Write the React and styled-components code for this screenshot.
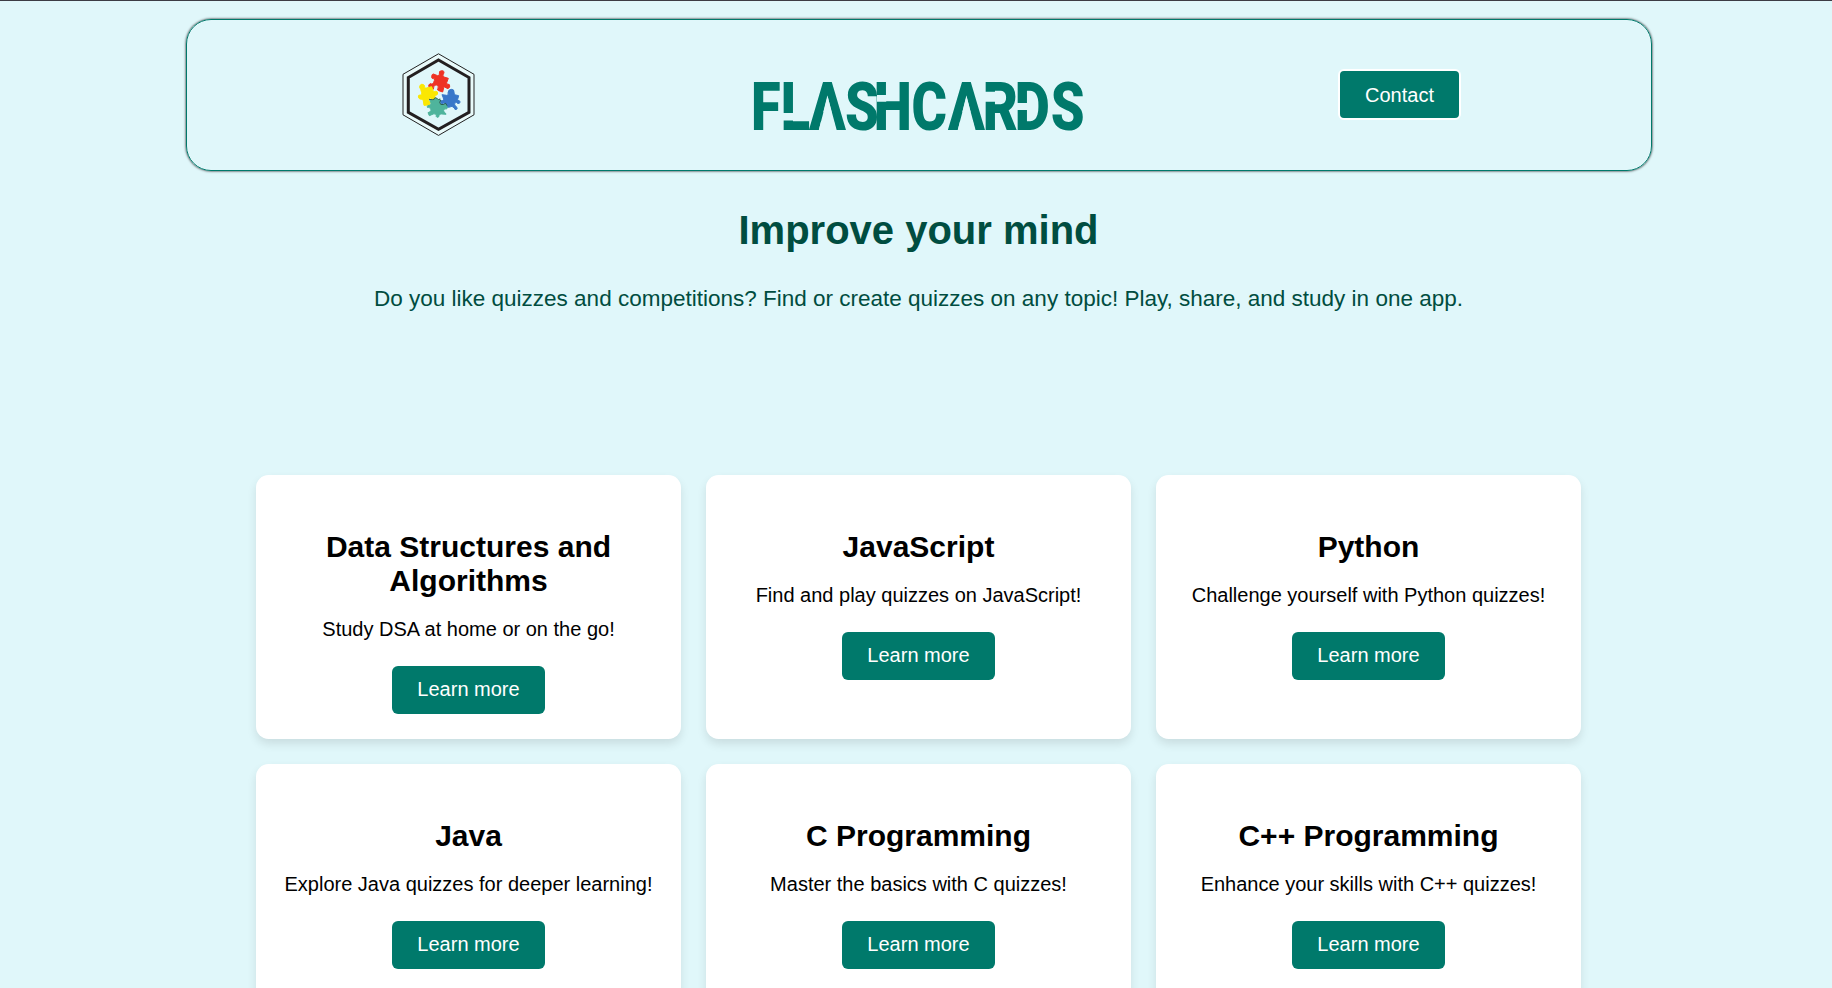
import React from "react";
import styled, { createGlobalStyle } from "styled-components";

const GlobalStyle = createGlobalStyle`
  * { box-sizing: border-box; }
  html, body { margin: 0; padding: 0; background: #e0f7fa; }
  body { height: 988px; overflow: hidden; font-family: "Liberation Sans", Arial, sans-serif; }
  h1, h2, p { margin: 0; }
`;

const Page = styled.div`
  display: flex;
  flex-direction: column;
  align-items: center;
  height: 988px;
  overflow: hidden;
  padding: 18px 0 0 5px;
  border-top: 1px solid #3c3c44;
  text-align: center;
`;

const Header = styled.header`
  display: grid;
  grid-template-columns: 502px 460px 501px;
  justify-items: center;
  flex: none;
  width: 1466px;
  height: 152px;
  margin-left: 1px;
  border: 1px solid #00796b;
  border-radius: 25px;
  box-shadow: 0 0 2.5px #000;
`;

const LogoSlot = styled.div`
  padding-top: 32px;
  height: 120px;
`;

const BrandSlot = styled.div`
  padding-top: 53px;
`;

const ContactSlot = styled.div`
  padding-top: 49px;
`;

const Art = styled.svg`
  display: block;
  overflow: visible;
`;

const Wordmark = styled.text`
  font-family: Roboto, sans-serif;
  font-weight: 900;
  font-size: 66px;
  fill: #00796b;
`;

const Button = styled.button`
  display: block;
  margin: 0 auto;
  border: 0;
  border-radius: 6px;
  width: 153px;
  height: 48px;
  padding: 0 0 1px;
  background: #00796b;
  color: #fff;
  font: 20px/23px "Liberation Sans", Arial, sans-serif;
`;

const ContactButton = styled(Button)`
  width: 123px;
  height: 51px;
  padding: 1px 0 0;
  border: 2px solid #fff;
`;

const Hero = styled.section`
  flex: none;
  padding-top: 36px;
  height: 304px;
  color: #004d40;
`;

const Headline = styled.h1`
  font-size: 40px;
  line-height: 46px;
`;

const Lead = styled.p`
  margin-top: 32px;
  font-size: 22.5px;
  line-height: 27px;
`;

const Grid = styled.main`
  display: grid;
  grid-template-columns: repeat(3, 425px);
  grid-auto-rows: 264px;
  gap: 25px;
  flex: none;
`;

const Card = styled.article`
  padding: 55px 25px 25px;
  border-radius: 12.5px;
  background: #fff;
  color: #000;
  box-shadow: 0 5px 10px rgba(0, 0, 0, 0.1);
`;

const CardTitle = styled.h2`
  font-size: 30px;
  line-height: 34px;
`;

const CardText = styled.p`
  margin: 20px 0 25px;
  font-size: 20px;
  line-height: 23px;
  white-space: nowrap;
`;

const topics = [
  ["Data Structures and Algorithms", "Study DSA at home or on the go!"],
  ["JavaScript", "Find and play quizzes on JavaScript!"],
  ["Python", "Challenge yourself with Python quizzes!"],
  ["Java", "Explore Java quizzes for deeper learning!"],
  ["C Programming", "Master the basics with C quizzes!"],
  ["C++ Programming", "Enhance your skills with C++ quizzes!"],
];

const PuzzleLogo = () => (
  <Art width="74" height="86" viewBox="401 52 74 86" aria-hidden="true">
    <path d="M438.5 53.8 474 74.3V114.8L438.5 135.4 403 114.8V74.3Z" fill="#e9fafa" stroke="#222" strokeWidth="1" />
    <path d="M438.5 60 469 77.5V112.3L438.5 129.3 408.3 112.3V77.5Z" fill="#e0f7fa" stroke="#231f20" strokeWidth="3" />
    <g transform="translate(414 66) scale(.3333)" strokeWidth="3">
      <path
        fill="#ee3224"
        stroke="#ee3224"
        d="M58 24 71 29Q77 31 76 24Q74 14 83 14Q94 14 88 25Q84 32 90 33L103 37 98 50Q96 56 101 54Q109 54 107 63Q103 72 96 65Q91 61 89 66L86 78 74 74Q68 72 72 67Q76 59 67 57Q58 56 59 65Q60 72 54 69L45 63Q42 57 47 54Q49 51 53 54Q57 55 59 49L61 44Q64 37 58 38Q52 38 53 31Q54 24 58 24Z"
      />
      <path
        fill="#fbe702"
        stroke="#fbe702"
        d="M19 57Q23 52 30 57Q33 61 31 64Q31 67 37 66L53 62 57 74Q60 79 65 76Q71 76 71 81Q71 88 65 88Q61 89 64 98L56 101Q50 92 45 99Q42 105 49 108L46 117 30 118 28 105Q27 98 22 100Q15 100 13 93Q12 86 19 87Q25 87 23 80L20 70Q14 63 19 57Z"
      />
      <path
        fill="#3877c9"
        stroke="#3877c9"
        d="M84 86 98 88Q106 87 102 81Q102 71 112 70Q121 70 120 78Q119 86 125 87L134 89 131 100Q130 105 136 104Q141 108 136 112Q130 114 127 109Q120 110 122 117L127 122Q132 127 128 130Q122 133 121 126L114 121 104 124Q96 125 98 117Q95 109 88 112Q81 115 79 109Q78 103 85 104Q91 101 88 96Z"
      />
      <path
        fill="#4fb49c"
        stroke="#4fb49c"
        d="M47 101 55 102Q61 104 61 99Q64 95 69 99Q72 104 77 100L80 102Q74 110 80 115Q88 118 94 113L100 124 98 129Q90 126 89 133Q89 141 95 142L96 145 83 144Q75 143 75 149Q76 154 69 154Q65 152 67 147Q64 142 58 144L46 149 42 140Q49 139 51 133Q52 125 43 124Q39 126 40 121Q40 118 46 118Q53 116 51 111Z"
      />
      <path
        fill="none"
        stroke="#1f4a40"
        strokeWidth="2.5"
        d="M45 100 55 101Q61 103 61 97Q65 93 70 98Q73 103 79 99M80 102Q74 110 80 115Q88 118 95 112L99 119"
      />
    </g>
  </Art>
);

const Brand = () => (
  <Art width="334" height="58" viewBox="752 73 334 58">
    <g transform="scale(.82 1)">
      <Wordmark
        y="130"
        x="916 952 986.6 1030.5 1065.500 1111.500 1156 1198.5 1237.5 1281.5"
      >
        FLASHCARDS
      </Wordmark>
    </g>
    <path
      fill="#e0f7fa"
      d="M782 113h11.200v7.500h-11.200zM877 95h9.200v6.800h-9.200zM1016 103h11.600v7h-11.600zM984 91.800h11.600v10h-11.600zM827.600 96.300 836.800 130.500H818.700ZM966.500 96.300 975.700 130.500H957.600Z"
    />
  </Art>
);

export default function App() {
  return (
    <>
      <GlobalStyle />
      <Page>
        <Header>
          <LogoSlot><PuzzleLogo /></LogoSlot>
          <BrandSlot><Brand /></BrandSlot>
          <ContactSlot><ContactButton>Contact</ContactButton></ContactSlot>
        </Header>
        <Hero>
          <Headline>Improve your mind</Headline>
          <Lead>
            Do you like quizzes and competitions? Find or create quizzes on any topic! Play, share, and study in one app.
          </Lead>
        </Hero>
        <Grid>
          {topics.map(([title, text]) => (
            <Card key={title}>
              <CardTitle>{title}</CardTitle>
              <CardText>{text}</CardText>
              <Button>Learn more</Button>
            </Card>
          ))}
        </Grid>
      </Page>
    </>
  );
}
